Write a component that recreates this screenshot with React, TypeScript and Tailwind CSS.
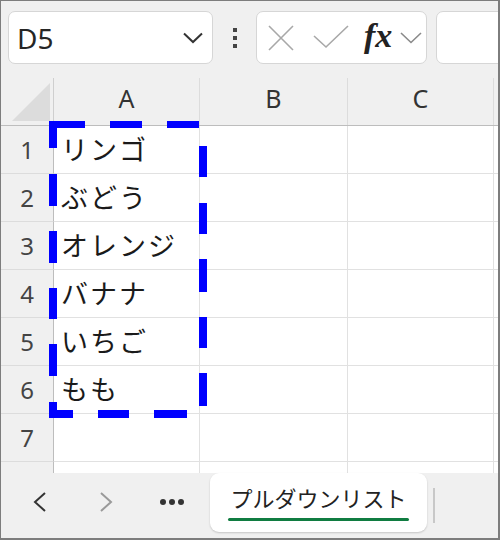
import React from 'react';

const rows = ['リンゴ', 'ぶどう', 'オレンジ', 'バナナ', 'いちご', 'もも', '', ''];

// marching-ants marquee around A1:A6, [x1, y1, x2, y2]
const dashes = [
  [49, 121, 85, 128], [110, 121, 142, 128], [167, 121, 199, 128],
  [199, 146, 207, 177], [199, 203, 207, 234], [199, 259, 207, 292], [199, 317, 207, 348], [199, 373, 207, 406],
  [154, 410, 187, 418], [98, 410, 129, 418], [49, 410, 73, 418],
  [49, 402, 57, 418], [49, 344, 57, 376], [49, 288, 57, 319], [49, 231, 57, 263], [49, 174, 57, 206], [49, 121, 57, 148],
];

const ui = { fontFamily: '"Noto Sans", "Open Sans", sans-serif' };
const jp = { fontFamily: '"Noto Sans CJK JP", "Noto Sans", sans-serif' };

export default function App() {
  return (
    <div className="w-[503px] h-[541px] bg-white">
      <div
        className="relative w-[500px] h-[540px] border-l border-t border-r-2 border-b-2 border-[#7d7d7d] bg-[#f0f0f0] flex flex-col overflow-hidden"
        style={ui}
      >
        {/* formula bar */}
        <div className="h-[77px] shrink-0 flex items-start pt-[10px] pl-[7px] overflow-hidden">
          <div className="w-[205px] h-[53px] shrink-0 bg-white border border-[#d6d6d6] rounded-[7px] flex items-center justify-between pl-[8px] pr-[9px]">
            <span className="text-[28px] text-[#262626] leading-none">D5</span>
            <svg width="20" height="12" viewBox="0 0 20 12">
              <path d="M1 1.5 L10 10 L19 1.5" fill="none" stroke="#333" strokeWidth="2" />
            </svg>
          </div>
          <div className="w-[43px] h-[53px] shrink-0 flex flex-col items-center justify-center gap-[4px]">
            <span className="w-[4px] h-[4px] bg-[#444]" />
            <span className="w-[4px] h-[4px] bg-[#444]" />
            <span className="w-[4px] h-[4px] bg-[#444]" />
          </div>
          <div className="w-[171px] h-[53px] bg-white border border-[#d6d6d6] rounded-[7px] flex items-center shrink-0">
            <svg width="26" height="26" viewBox="0 0 26 26" className="ml-[11px]">
              <path d="M1 1 L25 25 M25 1 L1 25" stroke="#a8a8a8" strokeWidth="1.6" fill="none" />
            </svg>
            <svg width="36" height="26" viewBox="0 0 36 26" className="ml-[19px]">
              <path d="M1 11 L13 22 L35 1" stroke="#a8a8a8" strokeWidth="1.6" fill="none" />
            </svg>
            <span
              className="ml-[15px] text-[34px] italic font-semibold text-[#222] leading-none -mt-[4px]"
              style={{ fontFamily: '"Liberation Serif", "DejaVu Serif", serif' }}
            >
              fx
            </span>
            <svg width="22" height="12" viewBox="0 0 22 12" className="ml-[8px]">
              <path d="M1 1 L11 10.5 L21 1" stroke="#8a8a8a" strokeWidth="1.6" fill="none" />
            </svg>
          </div>
          <div className="w-[90px] h-[53px] bg-white border border-[#d6d6d6] rounded-[7px] ml-[9px] shrink-0" />
        </div>

        {/* sheet grid */}
        <div className="h-[395px] shrink-0 overflow-hidden bg-white">
          <div className="flex h-[48px] bg-[#f0f0f0] border-b border-[#bdbdbd]">
            <div className="w-[53px] shrink-0 border-r border-[#cfcfcf] relative">
              <svg width="40" height="40" viewBox="0 0 40 40" className="absolute left-[10px] top-[4px]">
                <path d="M1 39 L39 1 L39 39 Z" fill="#dcdcdc" />
              </svg>
            </div>
            {['A', 'B', 'C'].map((c, i) => (
              <div
                key={c}
                className={`${i === 1 ? 'w-[148px]' : 'w-[146px]'} shrink-0 border-r border-[#dcdcdc] flex items-center justify-center pb-[6px] text-[25px] text-[#333]`}
              >
                {c}
              </div>
            ))}
          </div>
          {rows.map((t, i) => (
            <div key={i} className="flex h-[48px]">
              <div className="w-[53px] shrink-0 bg-[#f0f0f0] border-r border-b border-r-[#bdbdbd] border-b-[#dcdcdc] flex items-center justify-center text-[24px] text-[#444]">
                {i < 7 ? i + 1 : ''}
              </div>
              <div
                className="w-[146px] shrink-0 border-r border-b border-[#e1e1e1] flex items-center pl-[7px] text-[27px] text-[#1a1a1a] tracking-[2px]"
                style={jp}
              >
                {t}
              </div>
              <div className="w-[148px] shrink-0 border-r border-b border-[#e1e1e1]" />
              <div className="w-[146px] shrink-0 border-r border-b border-[#e1e1e1]" />
              <div className="flex-1 border-b border-[#e1e1e1]" />
            </div>
          ))}
        </div>

        {/* sheet tabs */}
        <div className="flex-1 flex items-start bg-[#f0f0f0] pl-[6px]">
          <div className="w-[66px] h-[58px] flex items-center justify-center">
            <svg width="14" height="20" viewBox="0 0 14 20">
              <path d="M12 1 L2 10 L12 19" stroke="#333" strokeWidth="2" fill="none" />
            </svg>
          </div>
          <div className="w-[66px] h-[58px] flex items-center justify-center">
            <svg width="14" height="20" viewBox="0 0 14 20">
              <path d="M2 1 L12 10 L2 19" stroke="#9a9a9a" strokeWidth="2" fill="none" />
            </svg>
          </div>
          <div className="w-[66px] h-[58px] flex items-center justify-center gap-[3px]">
            <span className="w-[6px] h-[6px] rounded-full bg-[#333]" />
            <span className="w-[6px] h-[6px] rounded-full bg-[#333]" />
            <span className="w-[6px] h-[6px] rounded-full bg-[#333]" />
          </div>
          <div className="ml-[5px] w-[217px] h-[59px] bg-white rounded-[9px] shadow-[0_1px_2px_rgba(0,0,0,0.18)] flex flex-col items-center pt-[10px]">
            <span className="text-[22px] leading-[29px] text-[#222]" style={jp}>
              プルダウンリスト
            </span>
            <span className="mt-[6px] w-[181px] h-[3px] bg-[#107c41] rounded-full" />
          </div>
          <div className="ml-[6px] mt-[15px] w-[2px] h-[35px] bg-[#c8c8c8]" />
        </div>

        <svg width="503" height="541" className="absolute -left-px -top-px pointer-events-none">
          {dashes.map(([x1, y1, x2, y2], i) => (
            <rect key={i} x={x1} y={y1} width={x2 - x1} height={y2 - y1} fill="#0000ff" />
          ))}
        </svg>
      </div>
    </div>
  );
}
